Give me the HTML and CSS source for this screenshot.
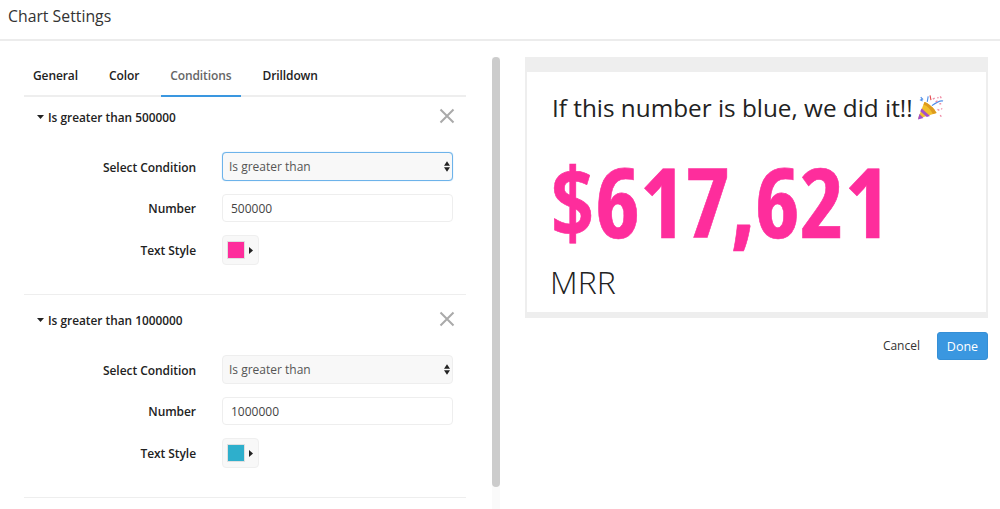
FILE: index.html
```html
<!DOCTYPE html>
<html lang="en">
<head>
<meta charset="utf-8">
<title>Chart Settings</title>
<link rel="stylesheet" href="styles.css">
</head>
<body>
<header class="top-bar"><h1 class="top-title">Chart Settings</h1></header>
<main class="layout">
  <div class="settings">
    <div class="settings-body">
      <nav class="tabs">
        <a class="tab">General</a>
        <a class="tab">Color</a>
        <a class="tab tab-active">Conditions</a>
        <a class="tab">Drilldown</a>
      </nav>
      <section class="condition condition-first">
        <div class="condition-head">
          <span class="condition-name"><svg class="caret-down" width="7" height="4" viewBox="0 0 7 4"><path d="M0 0h7L3.500 4z"/></svg>Is greater than 500000</span>
          <svg class="close" width="16" height="16" viewBox="0 0 16 16"><path d="M1.500 1.500l13 13M14.500 1.500l-13 13"/></svg>
        </div>
        <div class="row">
          <label class="row-label">Select Condition</label>
          <div class="select-wrap">
            <select class="select select-focus"><option>Is greater than</option></select>
            <svg class="updown" width="6" height="11" viewBox="0 0 7 12"><path d="M3.500 0L7 5H0zM0 7h7l-3.500 5z"/></svg>
          </div>
        </div>
        <div class="row">
          <label class="row-label">Number</label>
          <input class="input" value="500000">
        </div>
        <div class="row">
          <label class="row-label">Text Style</label>
          <div class="style-btn"><span class="swatch swatch-pink"></span><svg class="caret-right" width="4" height="7" viewBox="0 0 4 7"><path d="M0 0l4 3.500L0 7z"/></svg></div>
        </div>
      </section>
      <section class="condition">
        <div class="condition-head">
          <span class="condition-name"><svg class="caret-down" width="7" height="4" viewBox="0 0 7 4"><path d="M0 0h7L3.500 4z"/></svg>Is greater than 1000000</span>
          <svg class="close" width="16" height="16" viewBox="0 0 16 16"><path d="M1.500 1.500l13 13M14.500 1.500l-13 13"/></svg>
        </div>
        <div class="row">
          <label class="row-label">Select Condition</label>
          <div class="select-wrap">
            <select class="select"><option>Is greater than</option></select>
            <svg class="updown" width="6" height="11" viewBox="0 0 7 12"><path d="M3.500 0L7 5H0zM0 7h7l-3.500 5z"/></svg>
          </div>
        </div>
        <div class="row">
          <label class="row-label">Number</label>
          <input class="input" value="1000000">
        </div>
        <div class="row">
          <label class="row-label">Text Style</label>
          <div class="style-btn"><span class="swatch swatch-teal"></span><svg class="caret-right" width="4" height="7" viewBox="0 0 4 7"><path d="M0 0l4 3.500L0 7z"/></svg></div>
        </div>
      </section>
    </div>
    <div class="scroll-track"><div class="scroll-thumb"></div></div>
  </div>
  <div class="preview">
    <div class="card">
      <div class="card-inner">
        <div class="card-title">If this number is blue, we did it!!
          <svg class="popper" width="27" height="27" viewBox="0 0 29 28">
            <path d="M1 26L8 8c4 1 11 7 13 12z" fill="#f2bf2c"/>
            <path d="M8 8c4 1 11 7 13 12l-4 1C14 15 11 12 7 11z" fill="#dd9a1e"/>
            <path d="M5 15l9 8-3.500 1.300-7-6.300zM2.600 21l4.400 4.400L1 27z" fill="#a450c8"/>
            <path d="M4 3l2 2-2 1 2 1M12 2l-1 6M28 7c-4-1-8 2-12 5" fill="none" stroke="#4f8fe8" stroke-width="1.200"/>
            <path d="M17 5l2-1M22 3l1 1M25 2l1 2M20 8l2-1M22 16l2 1M26 15l1 1M25 22l1 2M24 10l2 0" fill="none" stroke="#ef8fa8" stroke-width="1.500"/>
            <path d="M14 1l1 5" fill="none" stroke="#e5484d" stroke-width="1.200"/>
          </svg>
        </div>
        <div class="big-number">$617,621</div>
        <div class="metric">MRR</div>
      </div>
    </div>
    <div class="actions">
      <a class="cancel">Cancel</a>
      <button class="done">Done</button>
    </div>
  </div>
</main>
</body>
</html>
```
FILE: styles.css
```css
* { box-sizing: border-box; }
html, body { margin: 0; padding: 0; height: 100%; }
body {
  width: 1000px;
  height: 509px;
  overflow: hidden;
  background: #fff;
  color: #222;
  font-family: "Open Sans", "Liberation Sans", sans-serif;
  display: flex;
  flex-direction: column;
}
.top-bar {
  height: 41px;
  flex: none;
  border-bottom: 2px solid #ececec;
  padding-left: 8px;
  display: flex;
  align-items: flex-start;
}
.top-title {
  margin: 4px 0 0;
  font-size: 15.800px;
  line-height: 24px;
  font-weight: 500;
  color: #333;
}
.layout { flex: 1; display: flex; min-height: 0; }
.settings { width: 500px; flex: none; display: flex; }
.settings-body { width: 492px; padding: 14px 26px 0 24px; flex: none; }
.tabs {
  display: flex;
  gap: 13px;
  height: 42px;
  border-bottom: 2px solid #eeeeee;
}
.tab {
  padding: 0 9px;
  height: 42px;
  line-height: 41px;
  font-size: 12px;
  letter-spacing: -0.100px;
  font-weight: 600;
  color: #222;
}
.tab-active { color: #666; border-bottom: 2px solid #3a97e0; }
.condition { padding: 5px 12px 29px 0; border-bottom: 1px solid #eeeeee; }
.condition-first { padding-top: 0; }
.condition-head {
  display: flex;
  justify-content: space-between;
  align-items: center;
  height: 40px;
  margin-bottom: 15px;
}
.condition-name {
  display: flex;
  align-items: center;
  margin-left: 13px;
  font-size: 11.850px;
  font-weight: 600;
  color: #222;
}
.caret-down { margin-right: 4px; fill: #222; }
.close { fill: none; stroke: #aaa; stroke-width: 2; margin-right: -1px; margin-top: -3px; }
.row { display: flex; align-items: center; gap: 26px; margin: 0 1px 13px 0; }
.row:last-child { margin-bottom: 0; }
.row-label {
  width: 172px;
  text-align: right;
  font-size: 12px;
  letter-spacing: -0.060px;
  font-weight: 600;
  color: #222;
  padding-top: 1px;
}
.select-wrap { position: relative; flex: 1; height: 29px; }
.select {
  appearance: none;
  display: block;
  width: 100%;
  height: 29px;
  padding: 0 6px;
  border: 1px solid #eeeeee;
  border-radius: 4px;
  background: #f8f8f8;
  font: 400 12px "Open Sans", sans-serif;
  color: #555;
  outline: none;
}
.select-focus { border-color: #6db3ea; box-shadow: 0 0 1px #8cc4f0; }
.updown { position: absolute; right: 3px; top: 9px; fill: #222; }
.input {
  flex: 1;
  min-width: 0;
  height: 28px;
  padding: 0 8px;
  border: 1px solid #eeeeee;
  border-radius: 4px;
  background: #fff;
  font: 400 12px "Open Sans", sans-serif;
  color: #444;
  outline: none;
}
.style-btn {
  display: flex;
  align-items: center;
  width: 37px;
  height: 30px;
  padding-left: 4px;
  gap: 4px;
  background: #f8f8f8;
  border: 1px solid #efefef;
  border-radius: 4px;
}
.swatch { width: 18px; height: 18px; display: block; border: 1px solid #e0e0e0; }
.swatch-pink { background: #fe2d9c; }
.swatch-teal { background: #2eafcc; }
.caret-right { fill: #222; }
.scroll-track { width: 8px; flex: none; margin-top: 16px; background: #fafafa; }
.scroll-thumb { height: 430px; width: 8px; background: #cccccc; border-radius: 4px; }
.preview { flex: 1; padding: 16px 12px 0 25px; }
.card {
  height: 261px;
  background: #eeeeee;
  padding: 15px 2px 6px;
}
.card-inner { height: 100%; background: #fff; padding: 0 0 0 23px; overflow: hidden; }
.card-title {
  margin: 19px 0 0 2px;
  font-size: 24.300px;
  line-height: 33px;
  color: #222;
  white-space: nowrap;
  display: flex;
  align-items: center;
  gap: 4px;
}
.big-number {
  margin-top: 22px;
  font-size: 96px;
  line-height: 110px;
  font-weight: 700;
  font-stretch: 75%;
  -webkit-text-stroke: 0.600px #fe2d9c;
  color: #fe2d9c;
  white-space: nowrap;
}
.metric {
  margin-top: 6px;
  font-size: 32px;
  line-height: 40px;
  font-weight: 300;
  color: #222;
}
.actions {
  display: flex;
  justify-content: flex-end;
  align-items: center;
  gap: 18px;
  margin-top: 14px;
}
.cancel { font-size: 12px; color: #333; margin-right: -1px; padding-bottom: 2px; }
.done {
  width: 51px;
  height: 28px;
  padding: 0;
  border: 1px solid #358fd6;
  border-radius: 3px;
  background: #3a97e0;
  color: #fff;
  font: 400 12.500px "Open Sans", sans-serif;
}
```
